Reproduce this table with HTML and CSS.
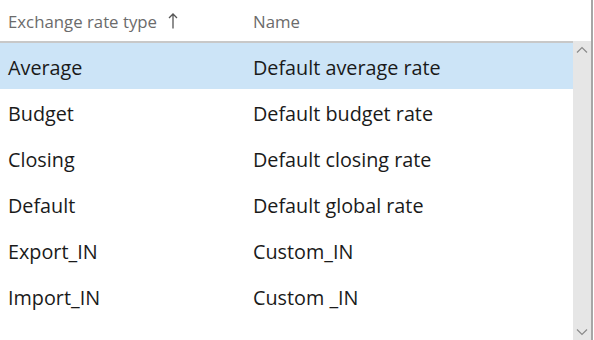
FILE: index.html
```html
<!DOCTYPE html>
<html lang="en">
<head>
  <meta charset="UTF-8" />
  <title>Exchange rate types</title>
  <link rel="stylesheet" href="styles.css">
</head>
<body>
  <div class="grid">
    <div class="head">
      <div class="col col-type">Exchange rate type
        <svg class="sort" width="10" height="16" viewBox="0 0 10 16"><path d="M5 15.5 V1 M1 5 L5 1 L9 5" fill="none" stroke="#555" stroke-width="1.3"/></svg>
      </div>
      <div class="col col-name">Name</div>
    </div>
    <div class="body">
      <div class="rows">
        <div class="row selected"><div class="col col-type">Average</div><div class="col col-name">Default average rate</div></div>
        <div class="row"><div class="col col-type">Budget</div><div class="col col-name">Default budget rate</div></div>
        <div class="row"><div class="col col-type">Closing</div><div class="col col-name">Default closing rate</div></div>
        <div class="row"><div class="col col-type">Default</div><div class="col col-name">Default global rate</div></div>
        <div class="row"><div class="col col-type">Export_IN</div><div class="col col-name">Custom_IN</div></div>
        <div class="row"><div class="col col-type">Import_IN</div><div class="col col-name">Custom _IN</div></div>
      </div>
      <div class="scrollbar">
        <svg class="arrow" width="12" height="8" viewBox="0 0 12 8"><path d="M1 6.5 L6 1.5 L11 6.5" fill="none" stroke="#8a8a8a" stroke-width="1.2"/></svg>
        <svg class="arrow" width="12" height="8" viewBox="0 0 12 8"><path d="M1 1.5 L6 6.5 L11 1.5" fill="none" stroke="#8a8a8a" stroke-width="1.2"/></svg>
      </div>
    </div>
  </div>
</body>
</html>
```

FILE: styles.css
```css
html, body {
  margin: 0;
  height: 100%;
  background: #fff;
}
body {
  font-family: "Open Sans", "Noto Sans", sans-serif;
  color: #1a1a1a;
  overflow: hidden;
}
.grid {
  width: 591px;
  height: 340px;
  border-right: 2px solid #a6a6a6;
  display: flex;
  flex-direction: column;
}
.head {
  display: flex;
  height: 41px;
  align-items: center;
  font-size: 16.8px;
  color: #6b6b6b;
}
.head .col {
  display: flex;
  align-items: center;
  padding-top: 1px;
}
.sort {
  margin-left: 11px;
  margin-top: 0;
}
.col-type {
  width: 245px;
  padding-left: 8px;
}
.col-name {
  padding-left: 0;
}
.body {
  flex: 1;
  display: flex;
}
.rows {
  flex: 1;
  border-top: 2px solid #c8c8c8;
}
.row {
  display: flex;
  align-items: center;
  height: 46px;
  padding-top: 3px;
  box-sizing: border-box;
  font-size: 19.8px;
}
.row.selected {
  background: #cce4f7;
}
.scrollbar {
  width: 18px;
  background: #e6e6e6;
  display: flex;
  flex-direction: column;
  justify-content: space-between;
  align-items: center;
  padding: 5px 0 4px;
}
.arrow {
  display: block;
}
```
